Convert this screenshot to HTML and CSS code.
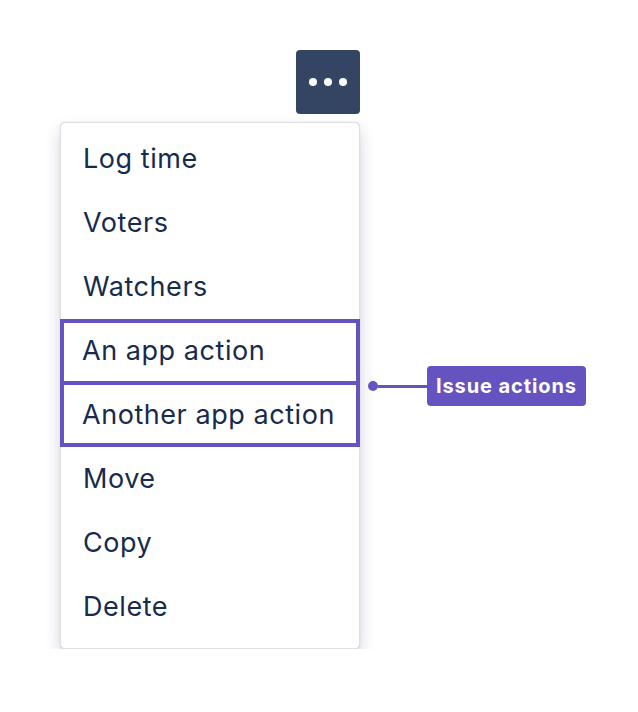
FILE: index.html
```html
<!DOCTYPE html>
<html lang="en">
  <head>
    <meta charset="UTF-8" />
    <meta name="viewport" content="width=device-width, initial-scale=1.0" />
    <title>Issue actions menu</title>
    <link rel="stylesheet" href="styles.css">
  </head>
  <body>
    <div class="stage">
      <div class="trigger-row">
        <button class="more-button" aria-label="More actions">
          <span class="dot"></span><span class="dot"></span><span class="dot"></span>
        </button>
      </div>
      <div class="dropdown">
        <div class="menu-item">Log time</div>
        <div class="menu-item">Voters</div>
        <div class="menu-item">Watchers</div>
        <div class="app-actions">
          <div class="menu-item">An app action</div>
          <div class="menu-item">Another app action</div>
        </div>
        <div class="menu-item">Move</div>
        <div class="menu-item">Copy</div>
        <div class="menu-item">Delete</div>

        <!-- annotation pointing at the app actions -->
        <div class="callout">
          <span class="callout-dot"></span>
          <span class="callout-line"></span>
          <span class="callout-label">Issue actions</span>
        </div>
      </div>
    </div>
  </body>
</html>
```

FILE: styles.css
```css
body {
  font-family: "Inter", "Noto Sans", sans-serif;
  color: #172b4d;
  background-color: #fff;
  margin: 0;
  padding: 0;
}

.stage {
  width: 300px;
  margin-left: 60px;
  padding-top: 50px;
}

.trigger-row {
  display: flex;
  justify-content: flex-end;
  margin-bottom: 8px;
}

.more-button {
  width: 64px;
  height: 64px;
  border: none;
  border-radius: 4px;
  background-color: #344563;
  display: flex;
  align-items: center;
  justify-content: center;
  gap: 7px;
  padding: 0;
}

.dot {
  width: 8px;
  height: 8px;
  border-radius: 50%;
  background-color: #fff;
}

.dropdown {
  position: relative;
  box-sizing: border-box;
  width: 300px;
  padding: 4px 0 9px;
  border: 1px solid #dfe1e6;
  border-radius: 5px;
  background-color: #fff;
  box-shadow: 0 8px 16px rgba(9, 30, 66, 0.18), 0 0 1px rgba(9, 30, 66, 0.25);
}

.menu-item {
  box-sizing: border-box;
  height: 64px;
  display: flex;
  align-items: center;
  padding: 0 22px 2px;
  font-size: 27px;
  letter-spacing: 0.55px;
}

/* highlighted group for app-provided actions */
.app-actions {
  margin: 0 -1px;
  outline: 4px solid #6554c0;
  outline-offset: -4px;
}

.app-actions .menu-item:first-child {
  box-shadow: inset 0 -2px 0 #6554c0;
}

.app-actions .menu-item:last-child {
  box-shadow: inset 0 2px 0 #6554c0;
}

.callout {
  position: absolute;
  left: 307px;
  top: 243px;
  display: flex;
  align-items: center;
}

.callout-dot {
  width: 10px;
  height: 10px;
  border-radius: 50%;
  background-color: #6554c0;
}

.callout-line {
  width: 49px;
  height: 3px;
  background-color: #6554c0;
}

.callout-label {
  background-color: #6554c0;
  color: #fff;
  font-size: 20px;
  font-weight: 700;
  letter-spacing: 0.9px;
  line-height: 24px;
  padding: 8px 9px;
  border-radius: 4px;
  white-space: nowrap;
}
```
